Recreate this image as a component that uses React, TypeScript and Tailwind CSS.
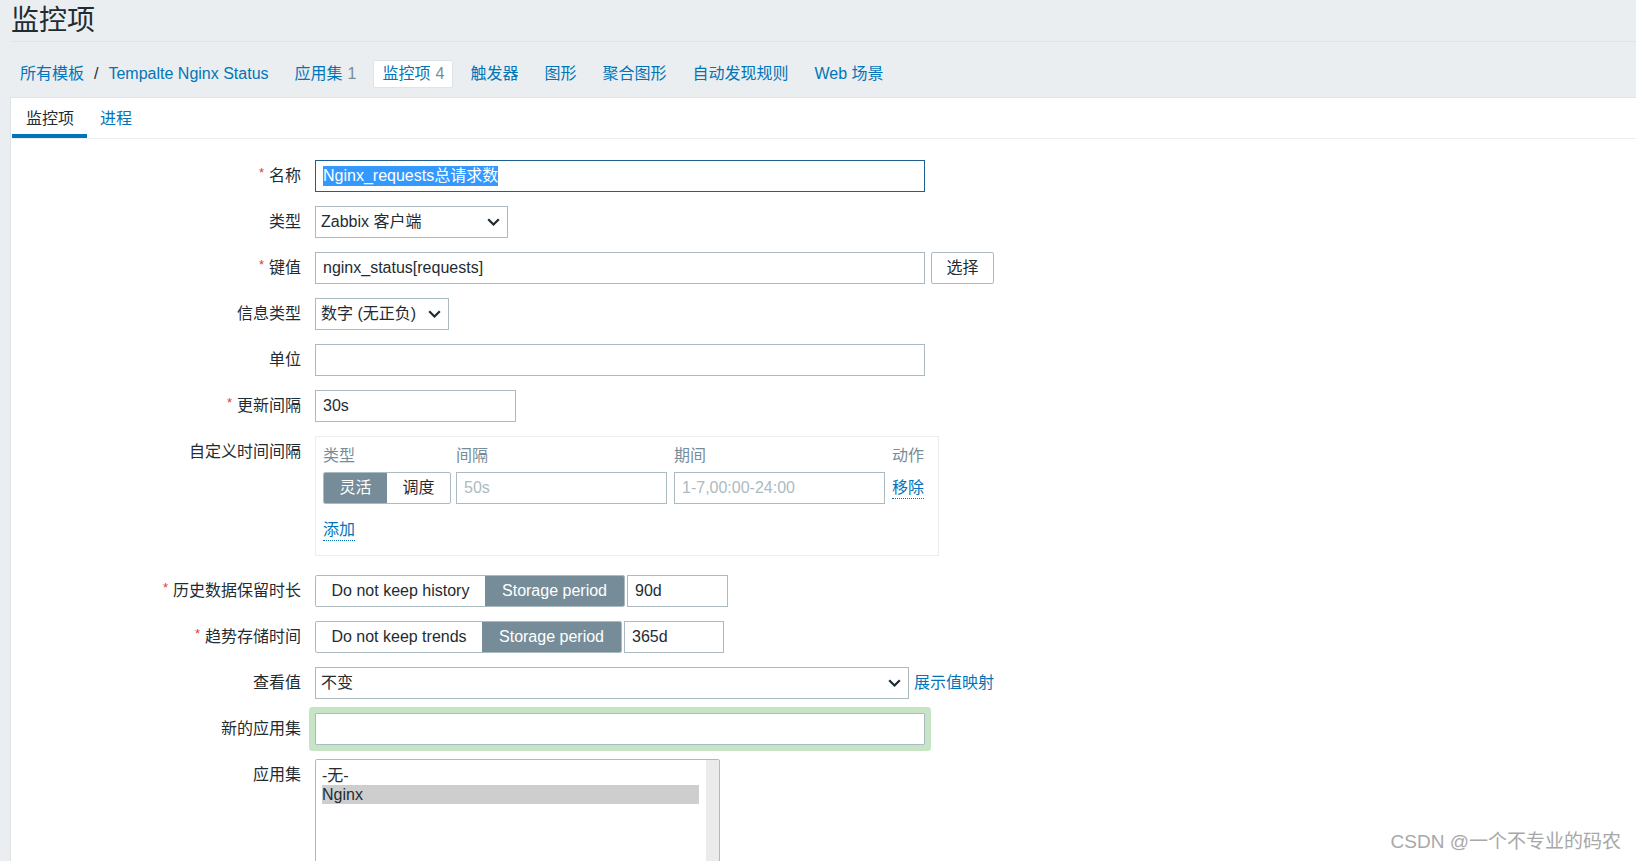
import React from "react";

const font = "font-['Liberation_Sans','Noto_Sans_CJK_SC',sans-serif]";

function Chevron() {
  return (
    <svg width="13" height="8" viewBox="0 0 13 8" className="shrink-0">
      <path d="M1.2 1.2l5.3 5.3 5.3-5.3" fill="none" stroke="#1f2c33" strokeWidth="2.2" />
    </svg>
  );
}

function Label({ text, required }: { text: string; required?: boolean }) {
  return (
    <div className="flex h-[32px] items-center justify-end self-start text-[16px] text-[#1f2c33]">
      {required && <span className="mr-[5px] -mt-[6px] text-[13px] text-[#e33734]">*</span>}
      {text}
    </div>
  );
}

function Box({
  className = "",
  border = "border-[#acbbc2]",
  children,
}: {
  className?: string;
  border?: string;
  children?: React.ReactNode;
}) {
  return (
    <div className={`flex h-[32px] items-center border ${border} bg-white px-[7px] text-[16px] text-[#1f2c33] ${className}`}>
      {children}
    </div>
  );
}

function Select({ text, className = "" }: { text: string; className?: string }) {
  return (
    <div
      className={`flex h-[32px] items-center justify-between border border-[#acbbc2] bg-white pl-[5px] pr-[7px] text-[16px] text-[#1f2c33] ${className}`}
    >
      <span>{text}</span>
      <Chevron />
    </div>
  );
}

function Segmented({ items, active, widths }: { items: string[]; active: number; widths: string[] }) {
  return (
    <div className="inline-flex h-[32px] overflow-hidden rounded-[2px] border border-[#acbbc2] bg-white text-[16px]">
      {items.map((it, i) => (
        <div
          key={it}
          className={`flex items-center justify-center ${widths[i]} ${
            i === active ? "bg-[#768d99] text-white" : "text-[#1f2c33]"
          }`}
        >
          {it}
        </div>
      ))}
    </div>
  );
}

const navItems = [
  { name: "应用集", count: "1" },
  { name: "监控项", count: "4", active: true },
  { name: "触发器" },
  { name: "图形" },
  { name: "聚合图形" },
  { name: "自动发现规则" },
  { name: "Web 场景" },
];

export default function App() {
  return (
    <div className={`relative h-[861px] overflow-hidden bg-[#ebeef0] pl-[10px] ${font}`}>
      {/* Header */}
      <div className="flex h-[42px] items-center border-b border-[#dfe4e7] pl-[1px] text-[28px] text-[#1f2c33]">
        监控项
      </div>

      {/* Breadcrumb nav */}
      <nav className="flex items-center gap-[8px] pl-[1px] pt-[18px] pb-[9px] text-[16px] text-[#0275b8]">
        <div className="flex h-[28px] items-center px-[9px]">
          <span>所有模板</span>
          <span className="mx-[10px] text-[#1f2c33]">/</span>
          <span>Tempalte Nginx Status</span>
        </div>
        {navItems.map((item) => (
          <div
            key={item.name}
            className={`flex h-[28px] items-center rounded-[2px] border px-[8px] ${
              item.active ? "border-[#dfe4e7] bg-white" : "border-transparent"
            }`}
          >
            {item.name}
            {item.count && <span className="ml-[5px] text-[#768d99]">{item.count}</span>}
          </div>
        ))}
      </nav>

      {/* Panel */}
      <div className="border-l border-t border-[#dfe4e7] bg-white pb-[40px]">
        <div className="flex h-[41px] items-stretch border-b border-[#ebeef0] pl-[1px] text-[16px]">
          <div className="flex items-center border-b-[4px] border-[#0275b8] pl-[14px] pr-[13px] pt-[6px] text-[#1f2c33]">
            监控项
          </div>
          <div className="flex items-center pl-[13px] pr-[13px] pt-[2px] text-[#0275b8]">进程</div>
        </div>

        <div className="mt-[21px] grid grid-cols-[290px_1fr] gap-x-[14px] gap-y-[14px]">
          <Label text="名称" required />
          <Box className="w-[610px]" border="border-[#1f5f8f]">
            <span className="bg-[#3399ff] leading-[20px] text-white">Nginx_requests总请求数</span>
          </Box>

          <Label text="类型" />
          <Select text="Zabbix 客户端" className="w-[193px]" />

          <Label text="键值" required />
          <div className="flex gap-[6px]">
            <Box className="w-[610px]">nginx_status[requests]</Box>
            <div className="flex h-[32px] w-[63px] items-center justify-center rounded-[2px] border border-[#acbbc2] bg-white text-[16px] text-[#1f2c33]">
              选择
            </div>
          </div>

          <Label text="信息类型" />
          <Select text="数字 (无正负)" className="w-[134px]" />

          <Label text="单位" />
          <Box className="w-[610px]" />

          <Label text="更新间隔" required />
          <Box className="w-[201px]">30s</Box>

          <Label text="自定义时间间隔" />
          <div className="mb-[5px] w-[624px] border border-[#ebeef0] pb-[14px] pl-[7px] pt-[9px] text-[16px]">
            <div className="flex leading-[20px] text-[#768d99]">
              <div className="w-[133px]">类型</div>
              <div className="w-[218px]">间隔</div>
              <div className="w-[218px]">期间</div>
              <div>动作</div>
            </div>
            <div className="mt-[6px] flex items-center">
              <div className="w-[133px]">
                <Segmented items={["灵活", "调度"]} active={0} widths={["w-[63px]", "w-[63px]"]} />
              </div>
              <div className="w-[218px]">
                <Box className="w-[211px] text-[#acbbc2]">50s</Box>
              </div>
              <div className="w-[218px]">
                <Box className="w-[211px] text-[#acbbc2]">1-7,00:00-24:00</Box>
              </div>
              <span className="border-b border-dotted border-[#0275b8] leading-[20px] text-[#0275b8]">移除</span>
            </div>
            <div className="mt-[16px] flex">
              <span className="border-b border-dotted border-[#0275b8] leading-[20px] text-[#0275b8]">添加</span>
            </div>
          </div>

          <Label text="历史数据保留时长" required />
          <div className="flex gap-[2px]">
            <Segmented
              items={["Do not keep history", "Storage period"]}
              active={1}
              widths={["w-[169px]", "w-[139px]"]}
            />
            <Box className="w-[101px]">90d</Box>
          </div>

          <Label text="趋势存储时间" required />
          <div className="flex gap-[2px]">
            <Segmented
              items={["Do not keep trends", "Storage period"]}
              active={1}
              widths={["w-[166px]", "w-[139px]"]}
            />
            <Box className="w-[100px]">365d</Box>
          </div>

          <Label text="查看值" />
          <div className="flex items-center gap-[5px]">
            <Select text="不变" className="w-[594px]" />
            <span className="text-[16px] text-[#0275b8]">展示值映射</span>
          </div>

          <Label text="新的应用集" />
          <Box className="w-[610px] rounded-[1px] shadow-[0_0_0_6px_#c7e4c7]" />

          <Label text="应用集" />
          <div className="flex h-[130px] w-[405px] rounded-[2px] border border-[#acbbc2] bg-white text-[16px] text-[#1f2c33]">
            <div className="flex-1 pl-[6px] pr-[7px] pt-[6px]">
              <div className="leading-[19px]">-无-</div>
              <div className="bg-[#cecece] leading-[19px]">Nginx</div>
            </div>
            <div className="w-[13px] bg-[#ebebeb]" />
          </div>
        </div>
      </div>

      {/* Watermark */}
      <div className="absolute bottom-[7px] right-[15px] text-[19px] leading-[24px] text-[#a8a8a8] [text-shadow:0_0_2px_#ffffff]">
        CSDN @一个不专业的码农
      </div>
    </div>
  );
}
